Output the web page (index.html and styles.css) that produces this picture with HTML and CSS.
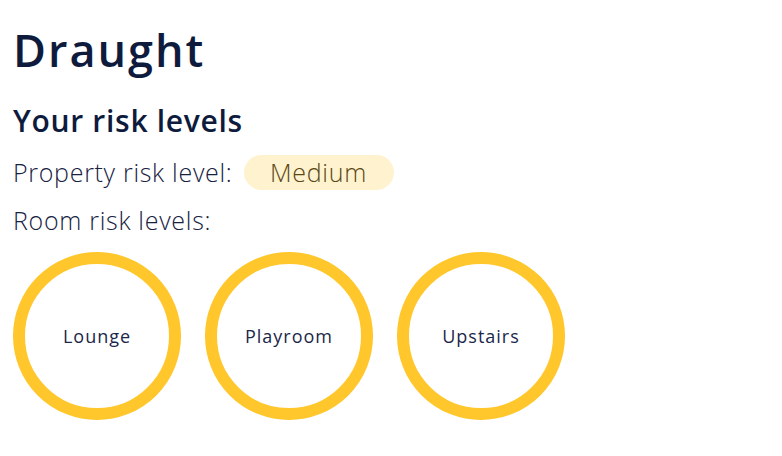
FILE: index.html
```html
<!DOCTYPE html>
<html lang="en">
<head>
<meta charset="utf-8">
<title>Draught</title>
<link rel="stylesheet" href="styles.css">
</head>
<body>
<main class="page">
  <h1 class="title">Draught</h1>
  <h2 class="subtitle">Your risk levels</h2>
  <div class="row row-first">
    <span class="label">Property risk level:</span>
    <span class="badge">Medium</span>
  </div>
  <div class="row row-second">
    <span class="label">Room risk levels:</span>
  </div>
  <div class="rooms">
    <div class="room">Lounge</div>
    <div class="room">Playroom</div>
    <div class="room">Upstairs</div>
  </div>
</main>
</body>
</html>
```

FILE: styles.css
```css
html, body {
  margin: 0;
  padding: 0;
  background: #ffffff;
}
body {
  font-family: "Open Sans", "Noto Sans", sans-serif;
  color: #15213f;
}
.page {
  padding: 22px 13px 0 13px;
  display: flex;
  flex-direction: column;
  align-items: flex-start;
}
.title {
  margin: 0;
  font-size: 45px;
  line-height: 56px;
  font-weight: 600;
  color: #0e1b3d;
  letter-spacing: 2px;
}
.subtitle {
  margin: 25px 0 0 0;
  font-size: 30px;
  line-height: 36px;
  font-weight: 600;
  color: #0e1b3d;
  letter-spacing: 0.7px;
}
.row {
  display: flex;
  align-items: center;
  gap: 11px;
  height: 36px;
}
.row-first {
  margin-top: 15px;
}
.row-second {
  margin-top: 12px;
}
.label {
  font-size: 25px;
  font-weight: 300;
  color: #17223f;
  letter-spacing: 0.7px;
}
.badge {
  display: inline-flex;
  align-items: center;
  justify-content: center;
  width: 150px;
  height: 35px;
  border-radius: 18px;
  background: #fff2cf;
  color: #5a4814;
  font-size: 25px;
  font-weight: 300;
  letter-spacing: 0.7px;
}
.rooms {
  display: flex;
  gap: 24px;
  margin-top: 14px;
}
.room {
  box-sizing: border-box;
  width: 168px;
  height: 168px;
  border: 12px solid #ffc72c;
  border-radius: 50%;
  display: flex;
  align-items: center;
  justify-content: center;
  font-size: 18px;
  letter-spacing: 1px;
  color: #1b2748;
}
```
